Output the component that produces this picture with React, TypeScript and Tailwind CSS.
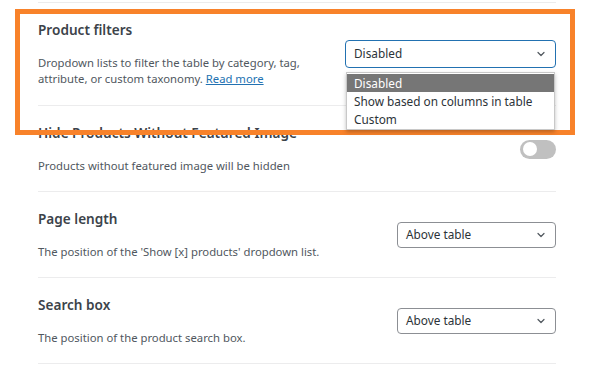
import { ChevronDown } from 'lucide-react';

// 설정 행 하나: 왼쪽 제목+설명, 오른쪽 컨트롤
function SettingRow({
  title,
  children,
  control,
  extraBottom,
}: {
  title: string;
  children: React.ReactNode;
  control: React.ReactNode;
  extraBottom?: boolean;
}) {
  return (
    <div
      className={`flex items-center justify-between border-b border-[#ececed] pt-[18px] ${
        extraBottom ? 'pb-[18px]' : 'pb-[17px]'
      }`}
    >
      <div className="w-[264px]">
        <h3 className="whitespace-nowrap text-[13.6px] leading-[18px] font-semibold text-[#3c434a]">{title}</h3>
        <p className="mt-4 text-[11.3px] leading-[16px] text-[#50575e]">{children}</p>
      </div>
      {control}
    </div>
  );
}

function Select({ value, width, focused }: { value: string; width: string; focused?: boolean }) {
  return (
    <div
      className={`flex items-center justify-between rounded-[4px] bg-white pl-2 pr-2 text-[11.8px] text-[#2c3338] ${width} ${
        focused ? 'h-[28px] border-[1.5px] border-[#2271b1]' : 'h-[26px] border border-[#8c8f94]'
      }`}
    >
      <span>{value}</span>
      <ChevronDown size={12} strokeWidth={2.4} className="text-[#50575e]" />
    </div>
  );
}

export default function App() {
  return (
    <div
      className="relative h-[368px] w-[603px] overflow-hidden bg-white"
      style={{ fontFamily: '"Noto Sans", "Open Sans", sans-serif' }}
    >
      <div className="ml-[38px] mt-[2px] w-[518px] border-t border-[#ececed]">
        <SettingRow
          title="Product filters"
          extraBottom
          control={
            <div className="relative">
              <Select value="Disabled" width="w-[211px]" focused />
              {/* 열린 드롭다운 목록 */}
              <div className="absolute left-[1px] top-[32px] z-10 w-[209px] border border-[#c8c8c8] bg-white py-[1px] text-[11.8px] leading-[18px] text-[#2c3338] shadow-[0_2px_4px_rgba(0,0,0,0.25)]">
                <div className="bg-[#767676] px-[7px] text-white">Disabled</div>
                <div className="px-[7px]">Show based on columns in table</div>
                <div className="px-[7px]">Custom</div>
              </div>
            </div>
          }
        >
          Dropdown lists to filter the table by category, tag, attribute, or custom taxonomy.{' '}
          <a className="text-[#2271b1] underline">Read more</a>
        </SettingRow>

        <SettingRow
          title="Hide Products Without Featured Image"
          control={
            <div className="flex h-[19px] w-[36px] items-center rounded-full bg-[#c0c0c0] px-[3px]">
              <div className="h-[14px] w-[14px] rounded-full bg-white" />
            </div>
          }
        >
          <span className="whitespace-nowrap">Products without featured image will be hidden</span>
        </SettingRow>

        <SettingRow title="Page length" control={<Select value="Above table" width="w-[159px]" />}>
          <span className="whitespace-nowrap">The position of the 'Show [x] products' dropdown list.</span>
        </SettingRow>

        <SettingRow title="Search box" control={<Select value="Above table" width="w-[159px]" />}>
          The position of the product search box.
        </SettingRow>
      </div>

      {/* 강조 표시용 주황 테두리 */}
      <div className="pointer-events-none absolute left-[15px] top-[9px] h-[126px] w-[560px] border-[5px] border-[#f8822a]" />
    </div>
  );
}
